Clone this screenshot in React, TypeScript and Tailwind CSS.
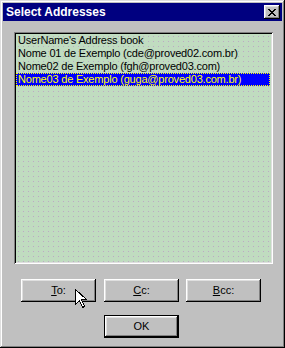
import React from "react";

const font = { fontFamily: '"Liberation Sans", Arial, sans-serif' };

function Btn({ children, def }: { children: React.ReactNode; def?: boolean }) {
  const inner = (
    <div className="w-full h-full bg-[#c0c0c0] shadow-[inset_-1px_-1px_#000,inset_1px_1px_#fff,inset_-2px_-2px_#808080,inset_2px_2px_#dfdfdf] flex items-center justify-center text-[11px] text-black">
      {children}
    </div>
  );
  if (def) {
    return <div className="w-[75px] h-[23px] border border-black">{inner}</div>;
  }
  return <div className="w-[75px] h-[23px]">{inner}</div>;
}

export default function App() {
  const items = [
    "UserName's Address book",
    "Nome 01 de Exemplo (cde@proved02.com.br)",
    "Nome02 de Exemplo (fgh@proved03.com)",
  ];
  return (
    <div
      className="relative w-[285px] h-[348px] bg-[#c0c0c0] p-[3px] flex flex-col shadow-[inset_-1px_-1px_#000,inset_1px_1px_#dfdfdf,inset_-2px_-2px_#808080,inset_2px_2px_#fff]"
      style={font}
    >
      <div className="h-[18px] bg-[#000080] flex items-center justify-between pl-[3px] pr-[2px]">
        <span className="text-white font-bold text-[12px] leading-none">Select Addresses</span>
        <div className="w-[16px] h-[14px] bg-[#c0c0c0] shadow-[inset_-1px_-1px_#000,inset_1px_1px_#fff,inset_-2px_-2px_#808080,inset_2px_2px_#dfdfdf] flex items-center justify-center">
          <svg width="8" height="7" viewBox="0 0 8 7" shapeRendering="crispEdges">
            <path d="M0 0h2v1h-2zM6 0h2v1h-2zM1 1h2v1h-2zM5 1h2v1h-2zM2 2h4v1h-4zM3 3h2v1h-2zM2 4h4v1h-4zM1 5h2v1h-2zM5 5h2v1h-2zM0 6h2v1h-2zM6 6h2v1h-2z" fill="#000" />
          </svg>
        </div>
      </div>
      <div className="ml-[11px] mt-[11px] w-[259px] h-[232px] p-[2px] bg-[#c0dcc0] shadow-[inset_1px_1px_#808080,inset_-1px_-1px_#fff,inset_2px_2px_#000,inset_-2px_-2px_#dfdfdf]">
        <div className="w-full h-full bg-[radial-gradient(circle,#bca8c4_0.5px,transparent_0.8px)] bg-[length:5px_5px]">
          {items.map((t) => (
            <div key={t} className="h-[13px] leading-[13px] pl-[2px] text-[11px] tracking-[-0.2px] text-black whitespace-nowrap">
              {t}
            </div>
          ))}
          <div className="h-[13px] leading-[11px] pl-[1px] text-[11px] tracking-[-0.2px] text-[#ffff00] bg-[#0000ff] border border-dotted border-[#ffff00] whitespace-nowrap mr-[1px]">
            Nome03 de Exemplo (guga@proved03.com.br)
          </div>
        </div>
      </div>
      <div className="flex mt-[15px] ml-[18px]">
        <Btn>
          <span><u>T</u>o:</span>
        </Btn>
        <div className="w-[8px]" />
        <Btn>
          <span><u>C</u>c:</span>
        </Btn>
        <div className="w-[7px]" />
        <Btn>
          <span><u>B</u>cc:</span>
        </Btn>
      </div>
      <div className="flex mt-[13px] ml-[101px]">
        <Btn def>OK</Btn>
      </div>
      <svg
        className="absolute left-[75px] top-[289px]"
        width="13"
        height="20"
        viewBox="0 0 13 20"
        shapeRendering="crispEdges"
      >
        <polygon
          points="0.5,0.5 0.5,15.5 4.5,11.5 7.5,18.5 9.5,17.5 6.5,10.5 11.5,10.5"
          fill="#fff"
          stroke="#000"
          strokeWidth="1"
        />
      </svg>
    </div>
  );
}
